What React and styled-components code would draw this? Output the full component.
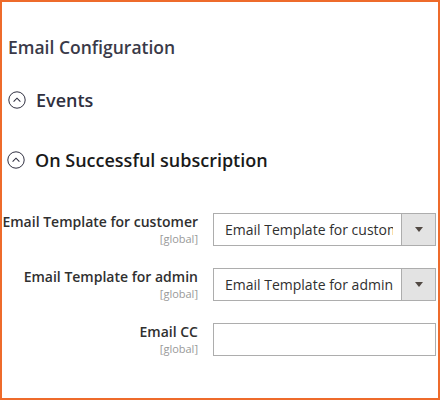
import React from "react"
import styled, { createGlobalStyle } from "styled-components"

const Global = createGlobalStyle`
    body {
        margin: 0;
        background: #fff;
        font-family: "Open Sans", "Liberation Sans", sans-serif;
        color: #303030;
    }
`

const Frame = styled.div`
    width: 440px;
    height: 400px;
    box-sizing: border-box;
    border: 2px solid #ee6b2b;
    padding: 35px 0 0 0;
    overflow: hidden;
`

const Title = styled.h1`
    margin: 0 0 0 6px;
    font-size: 17.5px;
    line-height: 20px;
    font-weight: 600;
    color: #3a3a48;
`

const Section = styled.div`
    display: flex;
    align-items: center;
    gap: 10px;
    margin: ${(p) => p.top}px 0 0 ${(p) => p.left}px;
    font-size: 18px;
    line-height: 22px;
    font-weight: 600;
    color: ${(p) => p.dark ? "#1a1a1a" : "#303040"};
`

const Form = styled.div`
    display: grid;
    grid-template-columns: 196px 223px;
    column-gap: 15px;
    row-gap: 22px;
    margin-top: 42px;
`

const Label = styled.div`
    text-align: right;
    font-size: 14px;
    line-height: 18px;
    font-weight: 600;
    color: #303030;
`

const Scope = styled.div`
    font-size: 11px;
    line-height: 15px;
    font-weight: 400;
    color: #999;
`

const Select = styled.div`
    display: flex;
    height: 33px;
    box-sizing: border-box;
    border: 1px solid #adadad;
    background: #fff;
`

const SelectText = styled.div`
    flex: 1;
    overflow: hidden;
    white-space: nowrap;
    margin: 0 8px 0 11px;
    font-size: 14px;
    line-height: 31px;
    color: #303030;
`

const ArrowBox = styled.div`
    width: 33px;
    display: flex;
    align-items: center;
    justify-content: center;
    background: #e3e3e3;
    border-left: 1px solid #adadad;
    &::after {
        content: "";
        border-left: 4px solid transparent;
        border-right: 4px solid transparent;
        border-top: 5px solid #514943;
    }
`

const Input = styled.div`
    height: 33px;
    box-sizing: border-box;
    border: 1px solid #adadad;
    background: #fff;
`

const Toggle = () => (
    <svg width="18" height="18" viewBox="0 0 18 18">
        <circle cx="9" cy="9" r="8.2" fill="none" stroke="#303040" strokeWidth="1" />
        <path d="M5.6 10.6 L9 7.2 L12.4 10.6" fill="none" stroke="#303040" strokeWidth="1.1" />
    </svg>
)

const rows = [
    { label: "Email Template for customer", value: "Email Template for customer" },
    { label: "Email Template for admin", value: "Email Template for admin" },
    { label: "Email CC" },
]

const App = () => {
    return (
        <Frame>
            <Global />
            <Title>Email Configuration</Title>
            <Section top={32} left={6}>
                <Toggle />
                Events
            </Section>
            <Section top={38} left={5} dark>
                <Toggle />
                On Successful subscription
            </Section>
            <Form>
                {rows.map((r, i) => (
                    <React.Fragment key={i}>
                        <Label>
                            {r.label}
                            <Scope>[global]</Scope>
                        </Label>
                        {r.value ? (
                            <Select>
                                <SelectText>{r.value}</SelectText>
                                <ArrowBox />
                            </Select>
                        ) : (
                            <Input />
                        )}
                    </React.Fragment>
                ))}
            </Form>
        </Frame>
    )
}

export default App
